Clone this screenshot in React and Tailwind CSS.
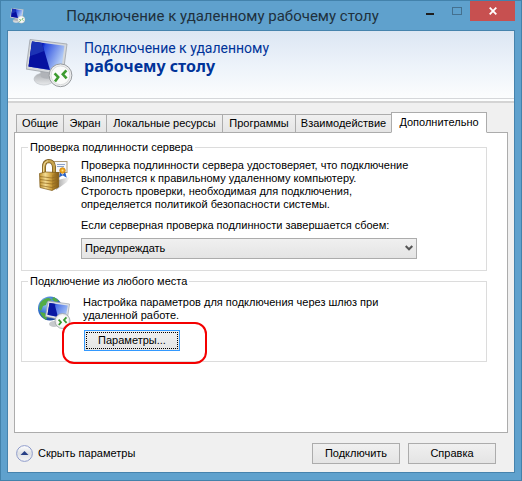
import { useState } from 'react';

const TABS = [
    { label: 'Общие', width: 'w-[47px]' },
    { label: 'Экран', width: 'w-[43px]' },
    { label: 'Локальные ресурсы', width: 'w-[116px]' },
    { label: 'Программы', width: 'w-[73px]' },
    { label: 'Взаимодействие', width: 'w-[96px]' },
    { label: 'Дополнительно', width: 'w-[96px]' },
];

function RemoteDesktopIcon({ className, id }) {
    return (
        <svg className={className} viewBox="0 0 48 50" aria-hidden="true">
            <defs>
                <linearGradient id={`${id}-screen`} x1="0" y1="0" x2="1" y2="0.4">
                    <stop offset="0" stopColor="#0412a8" />
                    <stop offset="0.38" stopColor="#0a20c0" />
                    <stop offset="0.45" stopColor="#2d4fe0" />
                    <stop offset="1" stopColor="#b4cdf6" />
                </linearGradient>
                <linearGradient id={`${id}-stand`} x1="0" y1="0" x2="0" y2="1">
                    <stop offset="0" stopColor="#a9acb0" />
                    <stop offset="1" stopColor="#e8eaec" />
                </linearGradient>
            </defs>
            <ellipse cx="18" cy="40" rx="10" ry="6" fill={`url(#${id}-stand)`} stroke="#b9bdc2" strokeWidth="0.6" />
            <path d="M14 30 L27 32 L26 39 Q19 41 15 38 Z" fill="#b0b3b8" />
            <path d="M4 0.5 L41 5 L37 36 L0 30 Z" fill="#d5d8db" stroke="#9da2a8" strokeWidth="0.8" />
            <path d="M6 2.5 L38.5 6.8 L35 33 L2.5 27.5 Z" fill={`url(#${id}-screen)`} />
            <path d="M6 2.5 L16 4 L24 31 L2.5 27.5 Z" fill="#0611a0" />
            <path d="M6 2.5 L16 4 L18 12 Q11 15 4.2 17 Z" fill="#2741bd" opacity="0.7" />
            <circle cx="34.5" cy="36.3" r="11.4" fill="#eeefef" stroke="#979b9f" strokeWidth="1" />
            <circle cx="34.5" cy="36.3" r="9.4" fill="#fafbfa" stroke="#d1d3d4" strokeWidth="0.8" />
            <path d="M28.6 34.4 L32.2 38.2 L29 42.6 M40.4 31.4 L36.8 35.3 L40.6 39.4" fill="none" stroke="#3c9b2f" strokeWidth="2.6" />
        </svg>
    );
}

function PadlockIcon({ className }) {
    return (
        <svg className={className} viewBox="0 0 32 32" aria-hidden="true">
            <defs>
                <linearGradient id="lock-body" x1="0" y1="0" x2="1" y2="0">
                    <stop offset="0" stopColor="#c0912e" />
                    <stop offset="0.3" stopColor="#f4dc93" />
                    <stop offset="0.6" stopColor="#cfa13d" />
                    <stop offset="1" stopColor="#7c5510" />
                </linearGradient>
                <linearGradient id="lock-shadow" x1="0" y1="0" x2="1" y2="0">
                    <stop offset="0" stopColor="#777777" />
                    <stop offset="1" stopColor="#ffffff" />
                </linearGradient>
            </defs>
            <path d="M19 21 L31 18 L28 23 L17 31 Z" fill="url(#lock-shadow)" opacity="0.7" />
            <rect x="14" y="2.5" width="14" height="11" fill="#f7f9fc" stroke="#b09a75" />
            <path d="M18 5.5 H26 M18 7.5 H25" stroke="#8ba3cb" />
            <path d="M22 12 L21 17 L23.5 15.5 M25 12 L26.5 17 L24 15.5" fill="none" stroke="#2a62c5" strokeWidth="1.5" />
            <circle cx="23.5" cy="11.5" r="2.8" fill="#efa51b" stroke="#c27a0b" strokeWidth="0.7" />
            <circle cx="23.5" cy="11.5" r="1" fill="#ffe083" />
            <path d="M5 16 V8 Q5 2.5 9.5 2 Q14.5 2 15 8 V15" fill="none" stroke="#73551c" strokeWidth="4" />
            <path d="M5 16 V8 Q5 2.5 9.5 2 Q14.5 2 15 8 V15" fill="none" stroke="#c6a34e" strokeWidth="2.6" />
            <path d="M4.5 15 V8 Q5 3 9 1.7" fill="none" stroke="#f4e3ad" strokeWidth="0.8" />
            <path d="M0.5 14.5 L6 13 L20 13.5 L19.5 28 L13 31.5 L1 28.5 Z" fill="url(#lock-body)" stroke="#7d5917" strokeWidth="0.7" />
            <path d="M13 16 L20 13.5 L19.5 28 L13 31.5 Z" fill="#936719" opacity="0.35" />
            <path d="M1 17.5 L13 19 L19.5 17 M1 20.5 L13 22 L19.5 20 M1 23.5 L13 25 L19.5 23 M1 26.5 L13 28.5 L19.5 26" fill="none" stroke="#8f6822" strokeWidth="0.7" />
        </svg>
    );
}

function GatewayIcon({ className }) {
    return (
        <svg className={className} viewBox="0 0 33 33" aria-hidden="true">
            <defs>
                <radialGradient id="globe" cx="0.35" cy="0.3" r="0.8">
                    <stop offset="0" stopColor="#9dc8f3" />
                    <stop offset="0.5" stopColor="#3576d0" />
                    <stop offset="1" stopColor="#0f3590" />
                </radialGradient>
                <linearGradient id="gateway-screen" x1="0" y1="0" x2="1" y2="0.5">
                    <stop offset="0.3" stopColor="#1227bb" />
                    <stop offset="0.4" stopColor="#4a70e7" />
                    <stop offset="1" stopColor="#a2bff3" />
                </linearGradient>
            </defs>
            <ellipse cx="16" cy="28" rx="5" ry="3" fill="#c6c9cc" />
            <circle cx="12" cy="12.5" r="12" fill="url(#globe)" />
            <path d="M2 7 Q6 2 11 2 L14 4 L9 6 L8 9 L5 10 L3 15 L1 13 Z M2 16 L7 17 L9 22 L8 24 Q3 20 2 16 Z M16 1 L21 5 L17 6 L14 3 Z" fill="#52ac43" />
            <path d="M10 5 L31.5 8 L29 25 L7.5 20.5 Z" fill="#dfe3e7" stroke="#9ba1a9" strokeWidth="0.7" />
            <path d="M11.5 7 L29.8 9.5 L27.5 22.5 L9.5 18.8 Z" fill="url(#gateway-screen)" />
            <path d="M11.5 7 L16.5 7.7 L20 21 L9.5 18.8 Z" fill="#0918a3" />
            <circle cx="24.5" cy="25" r="7.5" fill="#edeeee" stroke="#9b9fa4" strokeWidth="0.8" />
            <circle cx="24.5" cy="25" r="5.8" fill="#fafafa" />
            <path d="M20.6 23.6 L23 26.2 L20.8 29 M28.4 21.4 L26 24 L28.6 26.8" fill="none" stroke="#3b9930" strokeWidth="1.8" />
        </svg>
    );
}

function TitleBar() {
    return (
        <header className="flex h-[29px] shrink-0 items-start">
            <div className="flex h-[29px] flex-1 items-center pl-[3px]">
                <RemoteDesktopIcon id="title" className="h-4 w-4" />
                <h1 className="flex-1 pl-1 text-center font-['Roboto',sans-serif] text-[15px] leading-5 whitespace-nowrap text-[#20303c]">
                    Подключение к удаленному рабочему столу
                </h1>
            </div>
            <button type="button" aria-label="Свернуть" className="flex h-5 w-[30px] items-center justify-center">
                <span className="mt-[6px] h-[2px] w-2 bg-[#1e1e1e]" />
            </button>
            <button type="button" aria-label="Развернуть" disabled className="flex h-5 w-6 items-center justify-center">
                <span className="h-2 w-[10px] border border-[#44708f]" />
            </button>
            <button type="button" aria-label="Закрыть" className="ml-px flex h-5 w-[45px] items-center justify-center bg-[#c75050]">
                <svg className="h-2 w-2" viewBox="0 0 8 8" aria-hidden="true">
                    <path d="M0.7 0.7 L7.3 7.3 M7.3 0.7 L0.7 7.3" stroke="#fff" strokeWidth="1.8" />
                </svg>
            </button>
        </header>
    );
}

function Banner() {
    return (
        <div className="flex h-[72px] shrink-0 items-start border-b-2 border-[#d4d4d4] bg-linear-to-b from-[#dce6f3] via-[#edf3fa] to-[#fdfefe]">
            <div className="flex h-[68px] flex-1 items-start border-b border-[#d5d7da] pt-2 pl-[18px]">
                <RemoteDesktopIcon id="banner" className="h-[50px] w-12" />
                <p className="ml-[10px] font-['Roboto',sans-serif] text-sm leading-[18px] text-[#003399]">
                    Подключение к удаленному
                    <strong className="block font-['Noto_Sans',sans-serif] text-base leading-[18px] font-bold">рабочему столу</strong>
                </p>
            </div>
        </div>
    );
}

function GroupBox({ title, className, children }) {
    return (
        <fieldset className={`flex flex-col border border-[#dcdcdc] ${className}`}>
            <legend className="ml-[6px] px-[2px] leading-[13px]">{title}</legend>
            {children}
        </fieldset>
    );
}

function PushButton({ className, children }) {
    return (
        <button type="button" className={`border bg-linear-to-b from-[#f0f0f0] to-[#e4e4e4] ${className}`}>
            {children}
        </button>
    );
}

export default function App() {
    const [activeTab, setActiveTab] = useState('Дополнительно');

    return (
        <div className="flex min-h-screen flex-col border border-[#4382ab] bg-[#5fa1cd] px-[6px] pb-[7px] font-['Liberation_Sans',Arial,sans-serif] text-[11px] leading-[13px] text-black">
            <TitleBar />
            <main className="flex flex-1 flex-col border border-[#4683ad] bg-[#f0f0f0]">
                <Banner />

                <div className="flex flex-1 flex-col px-[6px] pt-[9px]">
                    <div role="tablist" className="relative -mb-px flex items-end pl-[2px]">
                        {TABS.map((tab) => (
                            <button
                                key={tab.label}
                                type="button"
                                role="tab"
                                aria-selected={tab.label === activeTab}
                                onClick={() => setActiveTab(tab.label)}
                                className={`border border-[#acacac] whitespace-nowrap ${tab.width} ${
                                    tab.label === activeTab
                                        ? 'h-[21px] border-b-white bg-white'
                                        : 'h-[19px] border-r-0 bg-linear-to-b from-[#f0f0f0] to-[#e5e5e5]'
                                }`}
                            >
                                {tab.label}
                            </button>
                        ))}
                    </div>

                    <section role="tabpanel" aria-label={activeTab} className="flex-1 border border-[#acacac] bg-white pt-2 pr-5 pb-8 pl-[6px]">
                        <GroupBox title="Проверка подлинности сервера" className="pb-[11px]">
                            <div className="flex pt-[5px] pl-[17px]">
                                <PadlockIcon className="h-8 w-8 shrink-0" />
                                <div className="ml-[10px] flex-1">
                                    <p>
                                        Проверка подлинности сервера удостоверяет, что подключение
                                        <br />
                                        выполняется к правильному удаленному компьютеру.
                                        <br />
                                        Строгость проверки, необходимая для подключения,
                                        <br />
                                        определяется политикой безопасности системы.
                                    </p>
                                    <label htmlFor="auth-failure" className="mt-2 block">
                                        Если серверная проверка подлинности завершается сбоем:
                                    </label>
                                    <div className="relative mt-[6px] max-w-[336px]">
                                        <select
                                            id="auth-failure"
                                            className="block h-[21px] w-full appearance-none border border-[#acacac] bg-linear-to-b from-[#f0f0f0] to-[#e4e4e4] pl-[3px]"
                                        >
                                            <option>Предупреждать</option>
                                            <option>Подключаться без предупреждения</option>
                                            <option>Не соединять</option>
                                        </select>
                                        <svg className="pointer-events-none absolute top-[7px] right-1 h-[6px] w-2" viewBox="0 0 8 6" aria-hidden="true">
                                            <path d="M0.7 1 L4 4.3 L7.3 1" fill="none" stroke="#555" strokeWidth="2" />
                                        </svg>
                                    </div>
                                </div>
                            </div>
                        </GroupBox>

                        <GroupBox title="Подключение из любого места" className="mt-1 pb-[10px]">
                            <div className="flex pt-2 pl-4">
                                <GatewayIcon className="h-[33px] w-[33px] shrink-0" />
                                <div className="ml-3">
                                    <p>
                                        Настройка параметров для подключения через шлюз при
                                        <br />
                                        удаленной работе.
                                    </p>
                                    <div className="relative mt-2 ml-px w-24">
                                        <PushButton className="block h-[21px] w-full border-[#3399ff] p-px">
                                            <span className="flex h-full items-center justify-center border border-dotted border-black">
                                                Параметры...
                                            </span>
                                        </PushButton>
                                        <div className="pointer-events-none absolute -top-2 -left-[22px] h-[42px] w-[145px] rounded-xl border-2 border-[#f40000]" />
                                    </div>
                                </div>
                            </div>
                        </GroupBox>
                    </section>
                </div>

                <footer className="flex items-center gap-2 pt-[10px] pr-[18px] pb-2 pl-2">
                    <button type="button" className="mr-auto flex items-center gap-[5px]">
                        <svg className="h-[17px] w-[17px]" viewBox="0 0 17 17" aria-hidden="true">
                            <defs>
                                <linearGradient id="toggle-fill" x1="0" y1="0" x2="0" y2="1">
                                    <stop offset="0" stopColor="#ffffff" />
                                    <stop offset="0.5" stopColor="#dde0e4" />
                                    <stop offset="1" stopColor="#f6f7f8" />
                                </linearGradient>
                            </defs>
                            <circle cx="8.5" cy="8.5" r="7.9" fill="url(#toggle-fill)" stroke="#8f9ccb" />
                            <path d="M4.5 10 L8.5 6 L12.5 10 Z" fill="#263f86" />
                        </svg>
                        Скрыть параметры
                    </button>
                    <PushButton className="h-[21px] w-[88px] border-[#acacac]">Подключить</PushButton>
                    <PushButton className="h-[21px] w-[88px] border-[#acacac]">Справка</PushButton>
                </footer>
            </main>
        </div>
    );
}
